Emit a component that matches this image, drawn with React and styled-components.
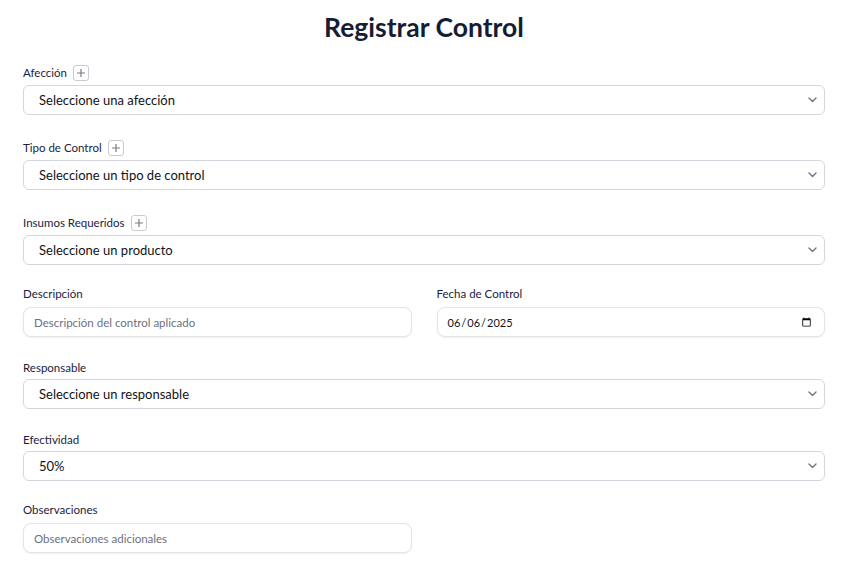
import React from "react";
import styled, { createGlobalStyle } from "styled-components";

const GlobalStyle = createGlobalStyle`
  html, body { margin: 0; padding: 0; background: #ffffff; }
  body { font-family: Lato, "Noto Sans", "Liberation Sans", sans-serif; color: #161c33; }
  * { box-sizing: border-box; }
`;

const Page = styled.div`
  padding: 0 21px 20px 23px;
`;

const Title = styled.h2`
  margin: 12px 0 0;
  height: 30px;
  line-height: 30px;
  text-align: center;
  font-size: 26.5px;
  font-weight: 700;
  color: #161c33;
`;

const Form = styled.form`
  display: flex;
  flex-direction: column;
`;

const Field = styled.div`
  display: flex;
  flex-direction: column;
  margin-top: ${(p) => p.$top}px;
`;

const LabelRow = styled.div`
  display: flex;
  align-items: center;
  gap: 6px;
  height: 16px;
  margin-bottom: ${(p) => p.$mb ?? 4}px;
`;

const Label = styled.label`
  font-size: 11.5px;
  line-height: 16px;
  color: #1b2240;
`;

const AddButton = styled.button`
  width: 16px;
  height: 16px;
  padding: 0;
  display: inline-flex;
  align-items: center;
  justify-content: center;
  border: 1px solid #c9cbd3;
  border-radius: 3px;
  background: #fff;
  color: #7a7d88;
  cursor: pointer;
`;

const SelectWrap = styled.div`
  position: relative;
  width: 100%;
`;

const Select = styled.select`
  appearance: none;
  -webkit-appearance: none;
  width: 100%;
  height: 30px;
  padding: 0 28px 0 15px;
  border: 1px solid #d6d7de;
  border-radius: 6px;
  background: #fff;
  font-family: inherit;
  font-size: 13px;
  color: #111318;
`;

const Chevron = styled.svg`
  position: absolute;
  right: 8px;
  top: 50%;
  margin-top: -3px;
  pointer-events: none;
  color: #6f7280;
`;

const Row = styled.div`
  display: grid;
  grid-template-columns: 1fr 1fr;
  column-gap: 25px;
  margin-top: ${(p) => p.$top}px;
`;

const Col = styled.div`
  display: flex;
  flex-direction: column;
`;

const Input = styled.input`
  width: 100%;
  height: 30px;
  padding: 0 ${(p) => (p.type === "date" ? "10px 0 9px" : "10px")};
  border: 1px solid #e3e4e8;
  border-radius: 8px;
  box-shadow: 0 1px 2px rgba(16, 24, 40, 0.06);
  background: #fff;
  font-family: inherit;
  font-size: ${(p) => (p.type === "date" ? "11px" : "11.5px")};
  color: #111318;
  &::placeholder { color: #6b7280; }
`;

const Plus = () => (
  <svg width="10" height="10" viewBox="0 0 10 10" fill="none" stroke="currentColor" strokeWidth="1.2">
    <path d="M5 1v8M1 5h8" />
  </svg>
);

const SelectField = ({ label, add, top, mb, children }) => (
  <Field $top={top}>
    <LabelRow $mb={mb}>
      <Label>{label}</Label>
      {add && (
        <AddButton type="button" aria-label={`Agregar ${label}`}>
          <Plus />
        </AddButton>
      )}
    </LabelRow>
    <SelectWrap>
      <Select defaultValue="">{children}</Select>
      <Chevron width="9" height="6" viewBox="0 0 9 6" fill="none" stroke="currentColor" strokeWidth="1.4" strokeLinecap="round" strokeLinejoin="round">
        <path d="M1 1l3.5 3.5L8 1" />
      </Chevron>
    </SelectWrap>
  </Field>
);

export default function App() {
  return (
    <>
      <GlobalStyle />
      <Page>
        <Title>Registrar Control</Title>
        <Form onSubmit={(e) => e.preventDefault()}>
          <SelectField label="Afección" add top={23}>
            <option value="">Seleccione una afección</option>
          </SelectField>
          <SelectField label="Tipo de Control" add top={25}>
            <option value="">Seleccione un tipo de control</option>
          </SelectField>
          <SelectField label="Insumos Requeridos" add top={25}>
            <option value="">Seleccione un producto</option>
          </SelectField>
          <Row $top={21}>
            <Col>
              <LabelRow $mb={5}>
                <Label>Descripción</Label>
              </LabelRow>
              <Input placeholder="Descripción del control aplicado" />
            </Col>
            <Col>
              <LabelRow $mb={5}>
                <Label>Fecha de Control</Label>
              </LabelRow>
              <Input type="date" defaultValue="2025-06-06" />
            </Col>
          </Row>
          <SelectField label="Responsable" top={23} mb={3}>
            <option value="">Seleccione un responsable</option>
          </SelectField>
          <SelectField label="Efectividad" top={23} mb={3}>
            <option value="">50%</option>
          </SelectField>
          <Row $top={21}>
            <Col>
              <LabelRow $mb={5}>
                <Label>Observaciones</Label>
              </LabelRow>
              <Input placeholder="Observaciones adicionales" />
            </Col>
          </Row>
        </Form>
      </Page>
    </>
  );
}
